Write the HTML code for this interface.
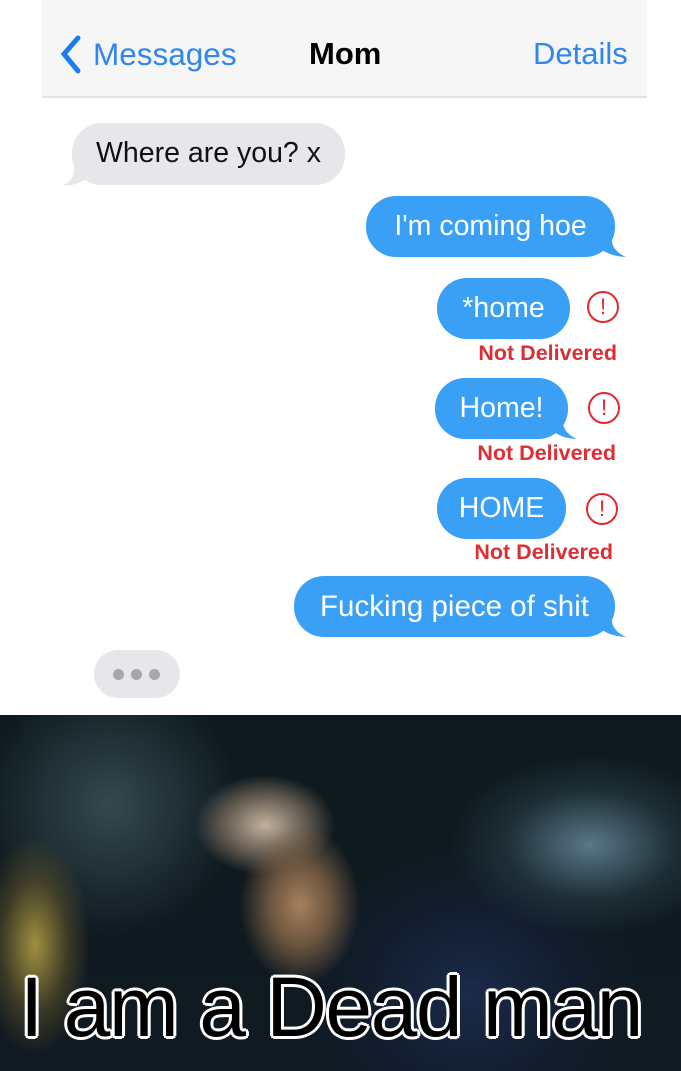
<!DOCTYPE html>
<html><head><style>
body{margin:0;width:681px;height:1071px;overflow:hidden;background:#fff;font-family:"Liberation Sans",sans-serif;position:relative}
.a{position:absolute}
.bar{left:42px;top:0;width:605px;height:96px;background:#f6f6f7;border-bottom:2px solid #e2e2e4}
.b{position:absolute;border-radius:30px;font-size:28.5px;line-height:61px;height:61px;box-sizing:border-box;text-align:center}
.g{background:#e6e6eb;color:#111}
.u{background:#3aa0f6;color:#fff}
.ex{position:absolute;width:32px;height:32px;border:2px solid #e0282e;border-radius:50%;box-sizing:border-box;color:#e0282e;font-size:22px;line-height:28px;text-align:center}
.nd{position:absolute;color:#dc2e33;font-size:21.5px;font-weight:bold;text-align:right}
.img{left:0;top:715px;width:681px;height:356px;overflow:hidden;
background:
radial-gradient(ellipse 60px 80px at 300px 190px,#a7805c 0%,rgba(130,100,70,.8) 50%,rgba(0,0,0,0) 100%),
radial-gradient(ellipse 70px 50px at 265px 110px,#c4b09c 0%,rgba(150,130,110,.6) 60%,rgba(0,0,0,0) 100%),
radial-gradient(ellipse 55px 110px at 35px 230px,#a09040 0%,rgba(90,80,40,.6) 60%,rgba(0,0,0,0) 100%),
radial-gradient(ellipse 140px 90px at 590px 130px,#587888 0%,rgba(40,60,70,.6) 60%,rgba(0,0,0,0) 100%),
radial-gradient(ellipse 170px 150px at 470px 280px,#1a2b4a 0%,rgba(20,30,55,.6) 60%,rgba(0,0,0,0) 100%),
radial-gradient(ellipse 130px 130px at 110px 90px,#34494f 0%,rgba(0,0,0,0) 100%),
linear-gradient(#0e1a1d,#101a22)}
.cap{position:absolute;left:20px;top:962px;font-size:84px;line-height:90px;color:#000;text-shadow:-3px 0 0 #fff,3px 0 0 #fff,0 -3px 0 #fff,0 3px 0 #fff,-2px -2px 0 #fff,2px -2px 0 #fff,-2px 2px 0 #fff,2px 2px 0 #fff;letter-spacing:-1.5px;white-space:nowrap}
</style></head><body>
<div class="a bar"></div>
<svg class="a" style="left:56px;top:34px" width="30" height="42"><path d="M22 4 L8 20 L22 37" stroke="#1a7ef0" stroke-width="5" fill="none" stroke-linecap="round"/></svg>
<div class="a" style="left:93px;top:36px;font-size:31.5px;color:#2f86ee">Messages</div>
<div class="a" style="left:309px;top:36px;font-size:31px;font-weight:bold;color:#000">Mom</div>
<div class="a" style="left:533px;top:36px;font-size:31px;color:#2f86ee">Details</div>

<div class="b g" style="left:72px;top:123px;width:273px;height:62px">Where are you? x</div>
<svg class="a" style="left:60px;top:165px" width="30" height="22"><path d="M14 0 Q16 15 2 21 Q20 20 28 12 Z" fill="#e6e6eb"/></svg>

<div class="b u" style="left:366px;top:196px;width:249px">I'm coming hoe</div>
<svg class="a" style="left:598px;top:236px" width="30" height="22"><path d="M14 0 Q12 14 28 21 Q10 20 2 12 Z" fill="#3aa0f6"/></svg>

<div class="b u" style="left:437px;top:278px;width:133px">*home</div>
<div class="ex" style="left:587px;top:291px">!</div>
<div class="nd" style="left:400px;top:341px;width:217px">Not Delivered</div>

<div class="b u" style="left:435px;top:378px;width:133px">Home!</div>
<svg class="a" style="left:553px;top:418px" width="30" height="22"><path d="M10 0 Q8 14 24 21 Q6 20 0 12 Z" fill="#3aa0f6"/></svg>
<div class="ex" style="left:588px;top:392px">!</div>
<div class="nd" style="left:400px;top:441px;width:216px">Not Delivered</div>

<div class="b u" style="left:437px;top:478px;width:129px">HOME</div>
<div class="ex" style="left:586px;top:493px">!</div>
<div class="nd" style="left:400px;top:540px;width:213px">Not Delivered</div>

<div class="b u" style="left:294px;top:576px;width:321px;font-size:29.5px">Fucking piece of shit</div>
<svg class="a" style="left:598px;top:616px" width="30" height="22"><path d="M14 0 Q12 14 28 21 Q10 20 2 12 Z" fill="#3aa0f6"/></svg>

<div class="b g" style="left:94px;top:650px;width:86px;height:48px;border-radius:24px"></div>
<div class="a" style="left:113px;top:669px;width:11px;height:11px;border-radius:50%;background:#a6a6ab"></div>
<div class="a" style="left:131px;top:669px;width:11px;height:11px;border-radius:50%;background:#a6a6ab"></div>
<div class="a" style="left:149px;top:669px;width:11px;height:11px;border-radius:50%;background:#a6a6ab"></div>

<div class="a img"></div>
<div class="cap">I am a Dead man</div>
</body></html>
